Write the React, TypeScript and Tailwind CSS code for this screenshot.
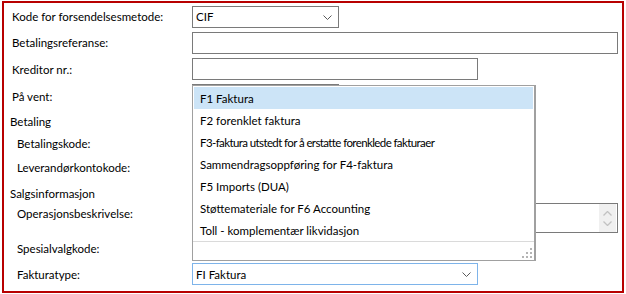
import React from 'react';

const options = [
    'F1 Faktura',
    'F2 forenklet faktura',
    'F3-faktura utstedt for å erstatte forenklede fakturaer',
    'Sammendragsoppføring for F4-faktura',
    'F5 Imports (DUA)',
    'Støttemateriale for F6 Accounting',
    'Toll - komplementær likvidasjon',
];

function Chevron({ className = '' }: { className?: string }) {
    return (
        <svg width="9" height="5" viewBox="0 0 9 5" className={className}>
            <path d="M0.5 0.5 L4.5 4.5 L8.5 0.5" fill="none" stroke="#5a5a5a" strokeWidth="1" />
        </svg>
    );
}

function Label({ text, sub }: { text: string; sub?: boolean }) {
    return (
        <div className={`w-[188px] shrink-0 whitespace-nowrap ${sub ? 'pl-[13px]' : 'pl-[8px]'}`}>{text}</div>
    );
}

function Grip() {
    const dots = [
        [8, 0],
        [4, 4], [8, 4],
        [0, 8], [4, 8], [8, 8],
    ];
    return (
        <svg width="10" height="10" viewBox="0 0 10 10">
            {dots.map(([x, y], i) => (
                <rect key={i} x={x} y={y} width="2" height="2" fill="#b4b4b4" />
            ))}
        </svg>
    );
}

export default function App() {
    return (
        <div className="w-[626px] h-[294px] bg-white pt-[1px] pl-[2px] font-['Lato','Liberation_Sans',Arial,sans-serif] text-[11.5px] leading-[16px] text-black">
            <div className="relative w-[622px] h-[292px] border-2 border-[#b80000]">
                <div className="flex flex-col">
                    {/* Kode for forsendelsesmetode */}
                    <div className="flex items-center h-[22px] mt-[3px]">
                        <Label text="Kode for forsendelsesmetode:" />
                        <div className="w-[147px] h-[22px] border border-[#7a7a7a] flex items-center justify-between pl-[3px] pr-[6px]">
                            <span>CIF</span>
                            <Chevron />
                        </div>
                    </div>

                    <div className="flex items-center h-[22px] mt-[4px]">
                        <Label text="Betalingsreferanse:" />
                        <div className="w-[426px] h-[22px] border border-[#7a7a7a]" />
                    </div>

                    <div className="flex items-center h-[22px] mt-[4px]">
                        <div className="pt-[1px]">
                            <Label text="Kreditor nr.:" />
                        </div>
                        <div className="w-[286px] h-[22px] border border-[#7a7a7a]" />
                    </div>

                    <div className="flex items-center h-[22px] mt-[4px]">
                        <div className="pt-[3px]">
                            <Label text="På vent:" />
                        </div>
                        <div className="w-[147px] h-[22px] border border-[#7a7a7a]" />
                    </div>

                    <div className="flex items-center h-[20px] mt-[5px] pl-[6px] pt-[1px]">Betaling</div>

                    <div className="flex items-center h-[20px] mt-[3px]">
                        <Label text="Betalingskode:" sub />
                    </div>

                    <div className="flex items-center h-[20px] mt-[4px]">
                        <Label text="Leverandørkontokode:" sub />
                    </div>

                    <div className="flex items-center h-[18px] mt-[7px] pl-[6px]">Salgsinformasjon</div>

                    <div className="flex items-start h-[30px]">
                        <div className="pt-[3px]">
                            <Label text="Operasjonsbeskrivelse:" sub />
                        </div>
                        <div className="w-[426px] h-[30px] border border-[#7a7a7a] flex justify-end pr-[1px]">
                            <div className="w-[17px] h-[28px] bg-[#f0f0f0] flex flex-col items-center justify-center gap-[5px]">
                                <svg width="9" height="5" viewBox="0 0 9 5">
                                    <path d="M0.5 4.5 L4.5 0.5 L8.5 4.5" fill="none" stroke="#c2c2c2" strokeWidth="1.3" />
                                </svg>
                                <svg width="9" height="5" viewBox="0 0 9 5">
                                    <path d="M0.5 0.5 L4.5 4.5 L8.5 0.5" fill="none" stroke="#c2c2c2" strokeWidth="1.3" />
                                </svg>
                            </div>
                        </div>
                    </div>

                    <div className="flex items-center h-[20px] mt-[6px]">
                        <div className="-mt-[1px]">
                            <Label text="Spesialvalgkode:" sub />
                        </div>
                        <div className="w-[286px] h-[20px] border border-[#7a7a7a]" />
                    </div>

                    <div className="flex items-center h-[22px] mt-[4px]">
                        <div className="pt-[2px]">
                            <Label text="Fakturatype:" sub />
                        </div>
                        <div className="w-[286px] h-[22px] border border-[#7eb4ea] flex items-center justify-between pl-[3px] pr-[6px]">
                            <span className="pt-[1px]">FI Faktura</span>
                            <Chevron />
                        </div>
                    </div>
                </div>

                {/* open dropdown list */}
                <div className="absolute left-[188px] top-[82px] w-[344px] h-[176px] bg-white border border-[#a0a0a0] border-r-2 flex flex-col">
                    <div className="pt-[1px] px-[1px]">
                        {options.map((o, i) => (
                            <div
                                key={o}
                                className={`h-[22px] flex items-center pl-[6px] pt-[2px] whitespace-nowrap ${i === 0 ? 'bg-[#cce4f7]' : ''} ${i === 2 ? 'tracking-[-0.6px]' : ''}`}
                            >
                                {o}
                            </div>
                        ))}
                    </div>
                    <div className="flex-1 border-t border-[#dadada] flex items-end justify-end pr-[2px] pb-[2px]">
                        <Grip />
                    </div>
                </div>
            </div>
        </div>
    );
}
